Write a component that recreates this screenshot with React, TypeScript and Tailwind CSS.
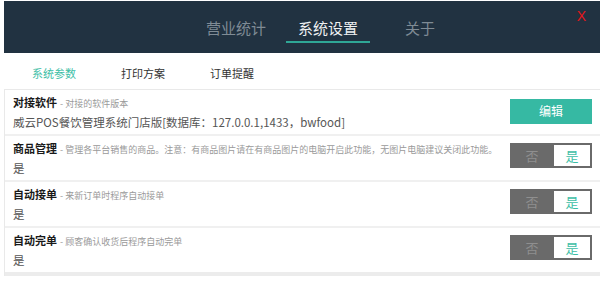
import React, { useState } from "react";

const FONT = { fontFamily: '"Noto Sans CJK SC", "Noto Sans", sans-serif' };

const TOP_TABS = ["营业统计", "系统设置", "关于"];
const SUB_TABS = ["系统参数", "打印方案", "订单提醒"];

type Row = {
  title: string;
  desc: string;
  value: string;
  kind: "edit" | "toggle";
};

const ROWS: Row[] = [
  {
    title: "对接软件",
    desc: "对接的软件版本",
    value: "威云POS餐饮管理系统门店版[数据库：127.0.0.1,1433，bwfood]",
    kind: "edit",
  },
  {
    title: "商品管理",
    desc: "管理各平台销售的商品。注意：有商品图片请在有商品图片的电脑开启此功能，无图片电脑建议关闭此功能。",
    value: "是",
    kind: "toggle",
  },
  {
    title: "自动接单",
    desc: "来新订单时程序自动接单",
    value: "是",
    kind: "toggle",
  },
  {
    title: "自动完单",
    desc: "顾客确认收货后程序自动完单",
    value: "是",
    kind: "toggle",
  },
];

const Toggle: React.FC<{ on: boolean; onChange: (v: boolean) => void }> = ({
  on,
  onChange,
}) => (
  <div className="flex w-[82px] h-[25px] bg-[#6a6a6a] p-[2px] pl-0">
    <button
      type="button"
      onClick={() => onChange(false)}
      className={
        on
          ? "flex-1 text-[13px] leading-none text-[#8f8f8f]"
          : "flex-1 text-[13px] leading-none text-[#3dbea6] bg-white ml-[2px]"
      }
    >
      否
    </button>
    <button
      type="button"
      onClick={() => onChange(true)}
      className={
        on
          ? "w-[36px] text-[13px] leading-none text-[#3dbea6] bg-white"
          : "w-[36px] text-[13px] leading-none text-[#8f8f8f]"
      }
    >
      是
    </button>
  </div>
);

export default function App() {
  const [tab, setTab] = useState(1);
  const [sub, setSub] = useState(0);
  const [flags, setFlags] = useState([true, true, true, true]);

  return (
    <div className="w-[600px] h-[290px] bg-white overflow-hidden" style={FONT}>
      {/* Header */}
      <div className="relative ml-[4px] mt-[1px] h-[52px] bg-[#213241] flex pl-[190px] gap-[8px]">
        {TOP_TABS.map((t, i) => (
          <button
            key={t}
            type="button"
            onClick={() => setTab(i)}
            className={
              i === tab
                ? "w-[84px] h-[42px] pt-[13px] text-[15px] leading-[18px] text-[#eef0f1] border-b-2 border-[#2fa796]"
                : "w-[84px] h-[42px] pt-[13px] text-[15px] leading-[18px] text-[#7f8b95] border-b-2 border-transparent"
            }
          >
            {t}
          </button>
        ))}
        <span
          className="absolute right-[14px] top-[6px] text-[14px] leading-[18px] text-[#e4161b]"
          style={{ fontFamily: '"Liberation Sans", Arial, sans-serif' }}
        >
          X
        </span>
      </div>

      {/* Sub tabs */}
      <div className="h-[36px] pt-[4px] flex items-center pl-[32px] gap-[45px]">
        {SUB_TABS.map((t, i) => (
          <button
            key={t}
            type="button"
            onClick={() => setSub(i)}
            className={
              i === sub
                ? "text-[11px] leading-[16px] text-[#3dbea6]"
                : "text-[11px] leading-[16px] text-[#333]"
            }
          >
            {t}
          </button>
        ))}
      </div>

      {/* Settings list */}
      <div className="ml-[4px] border-t border-l border-[#e9e9e9]">
        {ROWS.map((r, i) => (
          <div
            key={r.title}
            className={
              i === ROWS.length - 1
                ? "flex h-[48px] border-b-4 border-[#ececec]"
                : "flex h-[46px] border-b-2 border-[#f0f0f0]"
            }
          >
            <div className="flex-1 min-w-0 pl-[8px] pt-[4px]">
              <div className="flex items-baseline whitespace-nowrap">
                <span className="text-[11px] leading-[16px] font-bold text-[#1a1a1a]">
                  {r.title}
                </span>
                <span className="ml-[3px] text-[9px] leading-[16px] text-[#9a9a9a]">
                  - {r.desc}
                </span>
              </div>
              <div className="text-[11.5px] leading-[20px] text-[#555] whitespace-nowrap">
                {r.kind === "toggle" ? (flags[i] ? "是" : "否") : r.value}
              </div>
            </div>
            <div className="pt-[7px] pr-[8px]">
              {r.kind === "edit" ? (
                <button
                  type="button"
                  className="w-[82px] h-[25px] bg-[#36b9a3] text-white text-[12px] leading-none"
                >
                  编辑
                </button>
              ) : (
                <Toggle
                  on={flags[i]}
                  onChange={(v) =>
                    setFlags((f) => f.map((x, j) => (j === i ? v : x)))
                  }
                />
              )}
            </div>
          </div>
        ))}
      </div>
    </div>
  );
}
